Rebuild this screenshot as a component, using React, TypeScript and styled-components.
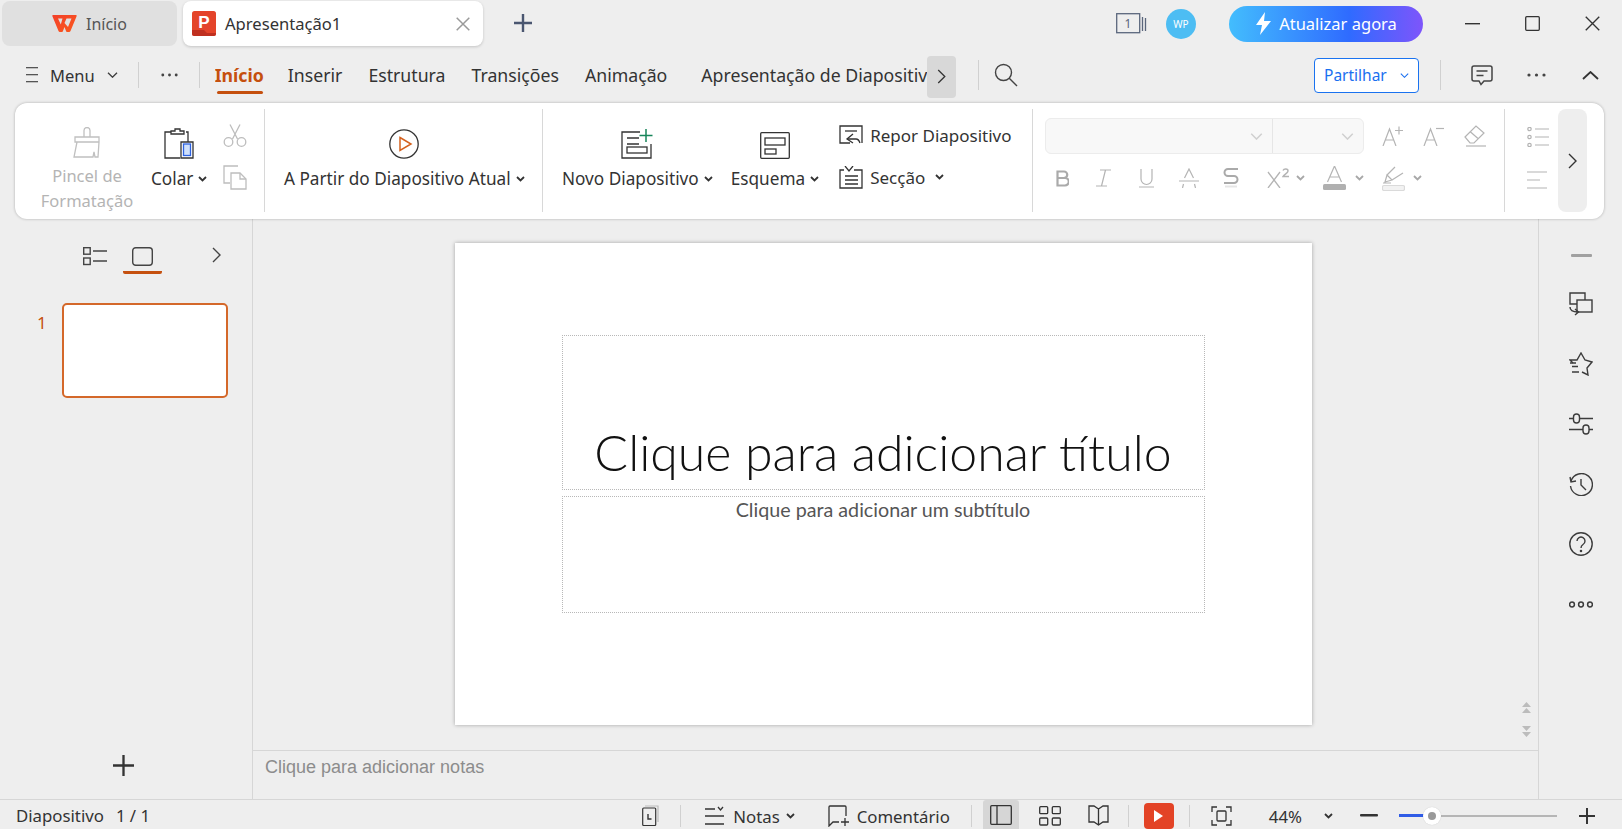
import React from 'react';
import styled, { createGlobalStyle } from 'styled-components';

const GlobalStyle = createGlobalStyle`
  html, body { margin: 0; padding: 0; height: 100%; overflow: hidden; background: #eeeeee; }
  body { font-family: "Noto Sans", "Liberation Sans", sans-serif; color: #333; }
  #root { height: 100%; }
  svg { display: block; flex: none; }
`;

const ACCENT = '#c5500f';
const INK = '#3c3c3c';
const MUTED = '#b4b4b4';

const Page = styled.div`
  width: 1622px;
  height: 829px;
  display: flex;
  flex-direction: column;
  background: #eeeeee;
  overflow: hidden;
`;

/* ---------- title bar ---------- */
const TitleBar = styled.div`
  height: 50px;
  display: flex;
  align-items: flex-start;
  padding: 1px 0 0 2px;
  box-sizing: border-box;
  flex: none;
`;

const Tab = styled.div<{ $active?: boolean }>`
  height: 45px;
  width: ${p => (p.$active ? 300 : 175)}px;
  margin-right: ${p => (p.$active ? 0 : 6)}px;
  box-sizing: border-box;
  display: flex;
  align-items: center;
  border-radius: 8px;
  background: ${p => (p.$active ? '#fff' : '#e0e0e0')};
  box-shadow: ${p => (p.$active ? '0 1px 3px rgba(0,0,0,.18)' : 'none')};
  padding-left: ${p => (p.$active ? 9 : 50)}px;
  font-size: ${p => (p.$active ? 16.6 : 16)}px;
  color: ${p => (p.$active ? '#333' : '#555')};
`;

const TabLabel = styled.span<{ $wide?: boolean }>`
  margin-left: 9px;
  flex: ${p => (p.$wide ? 1 : 'none')};
`;

const TabClose = styled.span`
  margin-right: 13px;
`;

const NewTab = styled.span`
  margin: 13px 0 0 31px;
`;

const TitleRight = styled.div`
  margin-left: auto;
  display: flex;
  align-items: center;
  height: 45px;
`;

const Avatar = styled.div`
  width: 30px;
  height: 30px;
  border-radius: 50%;
  margin: 0 33px 0 19px;
  background: #4dbdf3;
  color: #fff;
  font-size: 10px;
  display: flex;
  align-items: center;
  justify-content: center;
`;

const UpgradeButton = styled.div`
  width: 194px;
  height: 36px;
  border-radius: 18px;
  display: flex;
  align-items: center;
  justify-content: center;
  gap: 7px;
  color: #fff;
  font-size: 16.5px;
  background: linear-gradient(90deg, #43bdfd 0%, #2f6bff 62%, #7e55fb 100%);
`;

const WindowControls = styled.div`
  display: flex;
  align-items: center;
  gap: 45px;
  margin: 0 22px 0 42px;
`;

/* ---------- menu bar ---------- */
const MenuBar = styled.div`
  height: 50px;
  display: flex;
  align-items: center;
  flex: none;
  padding-left: 26px;
  position: relative;
`;

const MenuLabel = styled.span`
  font-size: 16.5px;
  margin: 0 12px 0 12px;
  color: #333;
`;

const VLine = styled.span<{ $h: number; $ml?: number; $mr?: number }>`
  width: 1px;
  height: ${p => p.$h}px;
  background: #d0d0d0;
  flex: none;
  margin-left: ${p => p.$ml ?? 0}px;
  margin-right: ${p => p.$mr ?? 0}px;
`;

const Dots = styled.span<{ $ml: number; $mr: number }>`
  margin: 0 ${p => p.$mr}px 0 ${p => p.$ml}px;
`;

const RibbonTabs = styled.div`
  width: 712px;
  margin-left: 15px;
  display: flex;
  gap: 26px;
  overflow: hidden;
  white-space: nowrap;
  height: 50px;
  align-items: center;
`;

const RibbonTab = styled.span<{ $active?: boolean }>`
  position: relative;
  font-size: 17.7px;
  font-weight: ${p => (p.$active ? 700 : 400)};
  color: ${p => (p.$active ? ACCENT : '#333')};
  line-height: 50px;
  flex: none;
  &:first-child {
    margin-right: -2px;
  }
  &:last-child {
    margin-left: 8px;
  }
  &::after {
    content: '';
    display: ${p => (p.$active ? 'block' : 'none')};
    position: absolute;
    left: 2px;
    right: 1px;
    bottom: 6px;
    height: 3px;
    border-radius: 2px;
    background: ${ACCENT};
  }
`;

const TabScroll = styled.div`
  width: 29px;
  height: 42px;
  margin-top: 3px;
  border-radius: 4px;
  background: #d8d8d8;
  display: flex;
  align-items: center;
  justify-content: center;
  flex: none;
`;

const MenuRight = styled.div`
  margin-left: auto;
  display: flex;
  align-items: center;
  margin-right: 23px;
`;

const ShareButton = styled.div`
  width: 105px;
  height: 35px;
  box-sizing: border-box;
  border: 1px solid #1a73f0;
  border-radius: 4px;
  background: #fff;
  color: #1a6ff0;
  font-size: 15.5px;
  display: flex;
  align-items: center;
  padding-left: 9px;
  gap: 13px;
  margin-right: 21px;
`;

/* ---------- ribbon ---------- */
const Ribbon = styled.div`
  height: 116px;
  margin: 3px 18px 0 15px;
  flex: none;
  box-sizing: border-box;
  background: #fff;
  border-radius: 12px;
  box-shadow: 0 0 3px rgba(0, 0, 0, 0.28);
  display: flex;
  position: relative;
  z-index: 2;
  padding: 6px 17px 7px 0;
`;

const Group = styled.div<{ $w: number; $pl?: number; $end?: boolean }>`
  width: ${p => p.$w}px;
  flex: ${p => (p.$end ? 1 : 'none')};
  box-sizing: border-box;
  padding-left: ${p => p.$pl ?? 0}px;
  display: flex;
  border-right: ${p => (p.$end ? 'none' : '1px solid #d8d8d8')};
`;

const BigButton = styled.div<{ $w?: number; $ml?: number }>`
  width: ${p => (p.$w ? `${p.$w}px` : 'auto')};
  margin-left: ${p => p.$ml ?? 0}px;
  display: flex;
  flex-direction: column;
  align-items: center;
  padding-top: 18px;
`;

const BigIcon = styled.div`
  height: 32px;
  display: flex;
  align-items: flex-end;
  justify-content: center;
  margin-bottom: 7px;
`;

const BigLabel = styled.div<{ $muted?: boolean }>`
  font-size: 17.2px;
  line-height: 25px;
  white-space: nowrap;
  text-align: center;
  display: flex;
  align-items: center;
  flex-wrap: wrap;
  justify-content: center;
  color: ${p => (p.$muted ? MUTED : '#333')};
`;

const PaintLabel = styled(BigLabel)`
  display: block;
  margin-top: -2px;
  font-size: 16.5px;
`;

const CaretSpot = styled.span<{ $ml?: number }>`
  margin-left: ${p => p.$ml ?? 5}px;
`;

const SmallStack = styled.div<{ $w: number; $ml: number }>`
  width: ${p => p.$w}px;
  margin-left: ${p => p.$ml}px;
  padding-top: 13px;
  display: flex;
  flex-direction: column;
  gap: 16px;
`;

const SmallRow = styled.div`
  height: 26px;
  display: flex;
  align-items: center;
  font-size: 17px;
  white-space: nowrap;
  color: #333;
  gap: 7px;
`;

const FontBlock = styled.div`
  display: flex;
  flex-direction: column;
  padding-top: 9px;
  width: 100%;
`;

const FontRow = styled.div`
  display: flex;
  align-items: center;
`;

const Combo = styled.div`
  width: 319px;
  height: 36px;
  box-sizing: border-box;
  border: 1px solid #ececec;
  border-radius: 6px;
  background: #f8f8f8;
  display: flex;
  margin-right: 18px;
`;

const ComboCell = styled.div<{ $w: number; $split?: boolean }>`
  width: ${p => p.$w}px;
  box-sizing: border-box;
  display: flex;
  align-items: center;
  justify-content: flex-end;
  padding-right: 9px;
  border-right: ${p => (p.$split ? '1px solid #e6e6e6' : 'none')};
`;

const FormatRow = styled(FontRow)`
  margin-top: 10px;
  height: 28px;
  padding-left: 11px;
`;

const FormatSlot = styled.span<{ $ml: number }>`
  margin-left: ${p => p.$ml}px;
`;

const ListStack = styled.div`
  display: flex;
  flex-direction: column;
  padding: 18px 0 0 22px;
  gap: 24px;
`;

const RibbonScroll = styled.div`
  width: 29px;
  flex: none;
  background: #eeeeee;
  border-radius: 8px;
  display: flex;
  align-items: center;
  justify-content: center;
`;

/* ---------- workspace ---------- */
const Workspace = styled.div`
  flex: 1;
  min-height: 0;
  display: flex;
`;

const SlidePane = styled.div`
  width: 253px;
  flex: none;
  box-sizing: border-box;
  border-right: 1px solid #d6d6d6;
  display: flex;
  flex-direction: column;
`;

const PaneTabs = styled.div`
  display: flex;
  height: 56px;
  padding: 28px 0 0 83px;
  box-sizing: border-box;
`;

const PaneTab = styled.div`
  width: 39px;
  height: 27px;
  margin-left: 16px;
  box-sizing: border-box;
  display: flex;
  justify-content: center;
  border-bottom: 3px solid ${ACCENT};
  border-radius: 0 0 2px 2px;
`;

const PaneChevron = styled.span`
  margin-left: 50px;
`;

const ThumbRow = styled.div`
  display: flex;
  margin-top: 28px;
  padding-left: 37px;
`;

const ThumbNumber = styled.span`
  width: 25px;
  padding-top: 8px;
  font-size: 17px;
  line-height: 24px;
  color: ${ACCENT};
`;

const Thumb = styled.div`
  width: 166px;
  height: 95px;
  box-sizing: border-box;
  border: 2px solid #d4682a;
  border-radius: 5px;
  background: #fff;
`;

const AddSlide = styled.div`
  margin-top: auto;
  padding: 0 0 23px 113px;
`;

const EditorColumn = styled.div`
  flex: 1;
  min-width: 0;
  display: flex;
  flex-direction: column;
`;

const Canvas = styled.div`
  flex: 1;
  min-height: 0;
  position: relative;
  display: flex;
  justify-content: center;
  padding: 24px 25px 0 0;
`;

const Slide = styled.div`
  width: 857px;
  height: 482px;
  box-sizing: border-box;
  background: #fff;
  box-shadow: 0 0 4px rgba(0, 0, 0, 0.32);
  padding: 92px 107px 0;
  display: flex;
  flex-direction: column;
  gap: 6px;
`;

const Placeholder = styled.div<{ $title?: boolean }>`
  height: ${p => (p.$title ? 155 : 117)}px;
  box-sizing: border-box;
  border: 1px dotted #b8b8b8;
  padding-bottom: ${p => (p.$title ? 5 : 0)}px;
  display: flex;
  justify-content: center;
  align-items: ${p => (p.$title ? 'flex-end' : 'flex-start')};
  font-family: Lato, "Noto Sans", sans-serif;
  font-weight: ${p => (p.$title ? 300 : 400)};
  font-size: ${p => (p.$title ? 50 : 19.7)}px;
  line-height: ${p => (p.$title ? 64 : 26)}px;
  color: ${p => (p.$title ? '#111' : '#555')};
  white-space: nowrap;
`;

const PageArrows = styled.div`
  position: absolute;
  right: 7px;
  bottom: 12px;
  display: flex;
  flex-direction: column;
  gap: 12px;
`;

const NotesBar = styled.div`
  height: 49px;
  flex: none;
  box-sizing: border-box;
  border-top: 1px solid #d6d6d6;
  padding: 4px 0 0 12px;
  font-family: "Liberation Sans", sans-serif;
  font-size: 18px;
  line-height: 24px;
  color: #8c8c8c;
`;

const RightRail = styled.div`
  width: 84px;
  flex: none;
  box-sizing: border-box;
  border-left: 1px solid #d6d6d6;
  display: flex;
  flex-direction: column;
  align-items: center;
  padding: 35px 0 0 1px;
`;

const RailRule = styled.div`
  width: 21px;
  height: 3px;
  border-radius: 1px;
  background: #a0a0a0;
  margin-bottom: 17px;
`;

const RailCell = styled.div`
  height: 60px;
  display: flex;
  align-items: center;
  justify-content: center;
`;

/* ---------- status bar ---------- */
const StatusBar = styled.div`
  height: 30px;
  flex: none;
  box-sizing: border-box;
  border-top: 1px solid #d6d6d6;
  display: flex;
  align-items: center;
  padding-left: 16px;
  font-size: 16.8px;
  color: #333;
`;

const StatusTools = styled.div`
  margin-left: auto;
  display: flex;
  align-items: center;
  height: 100%;
  box-sizing: border-box;
  padding: 2px 27px 0 0;
`;

const StatusLabel = styled.span<{ $ml: number; $mr?: number }>`
  margin-left: ${p => p.$ml}px;
  margin-right: ${p => p.$mr ?? 0}px;
  padding-top: 2px;
  white-space: nowrap;
`;

const StatusSlot = styled.span<{ $ml: number }>`
  margin-left: ${p => p.$ml}px;
`;

const ViewButton = styled.div`
  width: 36px;
  height: calc(100% + 2px);
  margin: -2px 0 0 11px;
  background: #d6d6d6;
  border-radius: 3px 3px 0 0;
  display: flex;
  align-items: center;
  justify-content: center;
`;

const PlayButton = styled.div`
  width: 30px;
  height: 26px;
  margin: 1px 0 0 15px;
  align-self: flex-start;
  background: #e34326;
  border-radius: 4px;
  display: flex;
  align-items: center;
  justify-content: center;
`;

const ZoomTrack = styled.div`
  width: 158px;
  height: 2px;
  margin-left: 21px;
  background: #b5b5b5;
  position: relative;
`;

const ZoomFill = styled.div`
  position: absolute;
  left: 0;
  top: -1px;
  height: 3px;
  background: #2f5ce6;
`;

const ZoomKnob = styled.div`
  position: absolute;
  top: -8px;
  width: 18px;
  height: 18px;
  box-sizing: border-box;
  border-radius: 50%;
  background: #fff;
  display: flex;
  align-items: center;
  justify-content: center;
  box-shadow: 0 0 1px rgba(0, 0, 0, 0.2);
  &::after {
    content: '';
    width: 8px;
    height: 8px;
    border-radius: 50%;
    background: #9a9a9a;
  }
`;

/* ---------- icons ---------- */
type SvgProps = { c?: string };

const Chevron = ({ c = INK, w = 11, h = 6 }: SvgProps & { w?: number; h?: number }) => (
  <svg width={w} height={h} viewBox="0 0 11 6" fill="none" stroke={c} strokeWidth="1.3">
    <path d="M1 .7l4.5 4.5L10 .7" />
  </svg>
);

const Caret = ({ c = '#333' }: SvgProps) => (
  <svg width="9" height="6" viewBox="0 0 9 6" fill="none" stroke={c} strokeWidth="1.8">
    <path d="M1 1l3.5 3.5L8 1" />
  </svg>
);

const RightChevron = ({ h = 16, c = '#333' }: SvgProps & { h?: number }) => (
  <svg width="9" height={h} viewBox="0 0 9 16" fill="none" stroke={c} strokeWidth="1.4">
    <path d="M1 1l7 7-7 7" />
  </svg>
);

const ThreeDots = ({ c = '#444', w = 19 }: SvgProps & { w?: number }) => (
  <svg width={w} height="4" viewBox="0 0 19 4" fill={c}>
    <circle cx="2" cy="2" r="1.6" />
    <circle cx="9.5" cy="2" r="1.6" />
    <circle cx="17" cy="2" r="1.6" />
  </svg>
);

const WpsLogo = () => (
  <svg width="25" height="17" viewBox="0 0 25 17">
    <defs>
      <linearGradient id="wpsRed" x1="0" y1="0" x2="1" y2="1">
        <stop offset="0" stopColor="#f2402a" />
        <stop offset="1" stopColor="#fb5a1e" />
      </linearGradient>
    </defs>
    <path d="M1.5 0h22a1 1 0 0 1 1 1.4L18.500 16a1.500 1.500 0 0 1-1.400 1h-2a1 1 0 0 1-1-.7L12.500 12l-1.600 4.300a1 1 0 0 1-1 .7h-2a1.500 1.500 0 0 1-1.400-1L.5 1.400A1 1 0 0 1 1.500 0z" fill="url(#wpsRed)" />
    <path d="M6 3.500h4.500L8.800 9.500zM12.500 8L14.500 3.500h5L16 12z" fill="#e0e0e0" />
  </svg>
);

const PptIcon = () => (
  <svg width="24" height="25" viewBox="0 0 24 25">
    <rect width="24" height="25" rx="2.5" fill="#e4442a" />
    <path d="M0 19h12l3 3h9v.5a2.5 2.5 0 0 1-2.500 2.500h-19A2.500 2.500 0 0 1 0 22.500z" fill="#bf3020" />
    <text x="12" y="16.500" textAnchor="middle" fontFamily="Liberation Sans" fontWeight="700" fontSize="17" fill="#fff">P</text>
  </svg>
);

const CloseX = ({ s = 14, c = '#9a9a9a', sw = 1.5 }: SvgProps & { s?: number; sw?: number }) => (
  <svg width={s} height={s} viewBox="0 0 14 14" fill="none" stroke={c} strokeWidth={sw}>
    <path d="M.7.7l12.6 12.6M13.3.7L.7 13.3" />
  </svg>
);

const PlusIcon = ({ s = 18, c = '#4a5670', sw = 2.4 }: SvgProps & { s?: number; sw?: number }) => (
  <svg width={s} height={s} viewBox="0 0 18 18" fill="none" stroke={c} strokeWidth={sw}>
    <path d="M9 0v18M0 9h18" />
  </svg>
);

const SheetCount = () => (
  <svg width="31" height="21" viewBox="0 0 31 21" fill="none" stroke="#5a667c" strokeWidth="1.3">
    <rect x=".7" y=".7" width="23" height="19" />
    <path d="M26.500 4v14M29.500 5v13" />
    <text x="12" y="15" textAnchor="middle" fontFamily="Noto Sans" fontSize="12" fill="#5a667c" stroke="none">1</text>
  </svg>
);

const Bolt = () => (
  <svg width="17" height="23" viewBox="0 0 17 23" fill="#fff">
    <path d="M10 0L1 13h6l-2 10 11-14H9z" />
  </svg>
);

const MinimizeIcon = () => (
  <svg width="15" height="2" viewBox="0 0 15 2" fill="#333"><rect width="15" height="1.4" /></svg>
);

const MaximizeIcon = () => (
  <svg width="15" height="15" viewBox="0 0 15 15" fill="none" stroke="#333" strokeWidth="1.3">
    <rect x=".7" y=".7" width="13.6" height="13.6" rx="1" />
  </svg>
);

const MenuIcon = () => (
  <svg width="12" height="20" viewBox="0 0 12 20" fill="#555">
    <rect y="2" width="12" height="1.3" /><rect y="9" width="12" height="1.3" /><rect y="16" width="12" height="1.3" />
  </svg>
);

const SearchIcon = () => (
  <svg width="24" height="24" viewBox="0 0 24 24" fill="none" stroke="#444" strokeWidth="1.4">
    <circle cx="9.5" cy="9.5" r="8" /><path d="M15 15l8 8" />
  </svg>
);

const CommentIcon = () => (
  <svg width="22" height="21" viewBox="0 0 22 21" fill="none" stroke="#444" strokeWidth="1.5">
    <path d="M3 1h16a2 2 0 0 1 2 2v11a2 2 0 0 1-2 2h-6l-3 3.500L8 16H3a2 2 0 0 1-2-2V3a2 2 0 0 1 2-2z" />
    <path d="M5.500 6h11M5.500 10.500h7" />
  </svg>
);

const PaintBrush = () => (
  <svg width="28" height="31" viewBox="0 0 28 31" fill="none" stroke="#c0c0c0" strokeWidth="1.3">
    <path d="M11 10V3.500a3 3 0 0 1 6 0V10" />
    <path d="M2 10h24v5H2zM4 15L1 30h19l1-5 1 5h3l1-15" />
  </svg>
);

const PasteIcon = () => (
  <svg width="30" height="31" viewBox="0 0 30 31" fill="none" stroke="#333" strokeWidth="1.3">
    <path d="M7 4H1v26h15M22 4h2v10" />
    <path d="M7 6V3h4V1h5v2h4v3z" />
    <path d="M17 14h12v16H17z" fill="#fff" />
    <rect x="19.500" y="16" width="7" height="11.500" stroke="#2d62e0" fill="#cfe0fb" />
  </svg>
);

const ScissorsIcon = () => (
  <svg width="24" height="23" viewBox="0 0 24 23" fill="none" stroke="#bdbdbd" strokeWidth="1.3">
    <path d="M7 .5L14.500 15M17 .5L9.500 15" />
    <circle cx="5.500" cy="18" r="4.300" /><circle cx="18.500" cy="18" r="4.300" />
  </svg>
);

const CopyIcon = () => (
  <svg width="24" height="25" viewBox="0 0 24 25" fill="none" stroke="#bdbdbd" strokeWidth="1.3">
    <path d="M15 1H1v17h6" />
    <path d="M8 8h9l6 6v10H8z" /><path d="M17 8v6h6" />
  </svg>
);

const PlayCircle = () => (
  <svg width="30" height="30" viewBox="0 0 30 30" fill="none">
    <circle cx="15" cy="15" r="14.200" stroke="#333" strokeWidth="1.3" />
    <path d="M11 8.500L22 15l-11 6.500z" stroke="#d4611e" strokeWidth="1.5" />
  </svg>
);

const NewSlideIcon = () => (
  <svg width="32" height="30" viewBox="0 0 32 30" fill="none" stroke="#333" strokeWidth="1.3">
    <path d="M19 3H1v26h29V15" />
    <path d="M6 9h12M6 15h12" /><rect x="6" y="18" width="20" height="6" />
    <path d="M25 0v13M18.500 6.500h13" stroke="#17855a" strokeWidth="1.5" />
  </svg>
);

const LayoutIcon = () => (
  <svg width="30" height="27" viewBox="0 0 30 27" fill="none" stroke="#333" strokeWidth="1.3">
    <rect x=".7" y=".7" width="28.600" height="25.600" rx="1" />
    <rect x="5" y="6" width="20" height="7" /><rect x="5" y="17" width="11" height="5" />
  </svg>
);

const ResetIcon = () => (
  <svg width="24" height="21" viewBox="0 0 24 21" fill="none" stroke="#333" strokeWidth="1.3">
    <path d="M11 18H1V1h22v17" />
    <path d="M6 6h12" />
    <path d="M14 9l-6 5 6 4" /><path d="M8 14h9c2 0 3 1 4 4" />
  </svg>
);

const SectionIcon = () => (
  <svg width="24" height="23" viewBox="0 0 24 23" fill="none" stroke="#333" strokeWidth="1.3">
    <path d="M5 4H1v18h22V4H15" />
    <path d="M6 0l4 5 4-5" />
    <path d="M6 10h13M6 14h13M6 18h13" />
  </svg>
);

const FontGrow = ({ minus }: { minus?: boolean }) => (
  <svg width="22" height="20" viewBox="0 0 22 20" fill="none" stroke={MUTED} strokeWidth="1.2">
    <path d="M1 20L7.500 3 14 20M3.500 14h8" />
    {minus ? <path d="M13 2.500h8" /> : <path d="M17 .5v8M13 4.500h8" />}
  </svg>
);

const EraserIcon = () => (
  <svg width="24" height="22" viewBox="0 0 24 22" fill="none" stroke={MUTED} strokeWidth="1.2">
    <path d="M2 12L13 1l8 7-10 10H7z" /><path d="M7 6.500l8 7" /><path d="M3 21h20" />
  </svg>
);

const BoldGlyph = () => (
  <svg width="13" height="17" viewBox="0 0 13 17" fill="none" stroke="#aaaaaa" strokeWidth="2.2">
    <path d="M1.500 8V1.500H8a3.200 3.200 0 0 1 0 6.500H1.500v7.500H9a3.700 3.700 0 0 0 0-7.500" />
  </svg>
);

const ItalicGlyph = () => (
  <svg width="17" height="18" viewBox="0 0 17 18" fill="none" stroke={MUTED} strokeWidth="1.2">
    <path d="M5 1h11M1 17h11M10.500 1L6.500 17" />
  </svg>
);

const UnderlineGlyph = () => (
  <svg width="15" height="19" viewBox="0 0 15 19" fill="none" stroke={MUTED} strokeWidth="1.2">
    <path d="M2 0v10a5.500 5.500 0 0 0 11 0V0M0 18h15" />
  </svg>
);

const StrikeGlyph = () => (
  <svg width="20" height="20" viewBox="0 0 20 20" fill="none" stroke={MUTED} strokeWidth="1.2">
    <path d="M5.500 10L10 1l4.500 9M0 13h20M4.500 16l-1 4M15.500 16l1 4" />
  </svg>
);

const ShadowGlyph = () => (
  <svg width="16" height="20" viewBox="0 0 16 20" fill="none" stroke="#aaaaaa" strokeWidth="2">
    <path d="M15 1H5a3.500 3.500 0 0 0 0 7h6a3.500 3.500 0 0 1 0 7H1" />
    <path d="M2 18.500h12" stroke="#e6e6e6" />
  </svg>
);

const SuperGlyph = () => (
  <svg width="23" height="20" viewBox="0 0 23 20" fill="none" stroke={MUTED} strokeWidth="1.3">
    <path d="M1 4l12 16M13 4L1 20" />
    <path d="M16 2.500c1-2 5-2 5 .5 0 2-4 3.500-5 5.500h6" strokeWidth="1.5" />
  </svg>
);

const FontColorGlyph = () => (
  <svg width="23" height="24" viewBox="0 0 23 24" fill="none">
    <path d="M4.500 16L11.500 0l7 16M7 11h9" stroke={MUTED} strokeWidth="1.2" />
    <rect y="18" width="23" height="6" rx="1.500" fill="#b0b0b0" />
  </svg>
);

const HighlightGlyph = () => (
  <svg width="23" height="25" viewBox="0 0 23 25" fill="none" stroke={MUTED} strokeWidth="1.2">
    <path d="M3 16l2-7 5 5zM5 9l8-8M10 14l11-7M1 17h8" />
    <rect x=".5" y="19.500" width="22" height="5" rx="1.500" stroke="#dadada" fill="#f2f2f2" />
  </svg>
);

const BulletList = () => (
  <svg width="22" height="20" viewBox="0 0 22 20" fill="none" stroke={MUTED} strokeWidth="1.2">
    <circle cx="2.500" cy="2" r="1.700" /><circle cx="2.500" cy="10" r="1.700" /><circle cx="2.500" cy="18" r="1.700" />
    <path d="M8 2h14M8 10h14M8 18h14" />
  </svg>
);

const AlignLines = () => (
  <svg width="20" height="18" viewBox="0 0 20 18" fill="none" stroke={MUTED} strokeWidth="1.2">
    <path d="M0 1h20M0 9h13M0 17h20" />
  </svg>
);

const OutlineIcon = () => (
  <svg width="24" height="19" viewBox="0 0 24 19" fill="none" stroke="#444" strokeWidth="1.4">
    <rect x=".7" y=".7" width="6.500" height="6.500" /><rect x=".7" y="11" width="6.500" height="6.500" />
    <path d="M10 4h14M10 14h14" />
  </svg>
);

const SlideTabIcon = () => (
  <svg width="21" height="19" viewBox="0 0 21 19" fill="none" stroke="#444" strokeWidth="1.4">
    <rect x=".7" y=".7" width="19.600" height="17.600" rx="3" />
  </svg>
);

const RailSwitch = () => (
  <svg width="24" height="24" viewBox="0 0 24 24" fill="none" stroke="#3c3c3c" strokeWidth="1.4">
    <path d="M8 12H1V1h15v7" /><rect x="8" y="8" width="15" height="12" />
    <path d="M1 15c0 4 3 5 8 5M6 17l3.500 3L6 23" />
  </svg>
);

const RailStar = () => (
  <svg width="24" height="24" viewBox="0 0 24 24" fill="none" stroke="#3c3c3c" strokeWidth="1.4">
    <path d="M4 11L1 8h7l4-7 4 7 7 2-5 6 1 7-6-3" />
    <path d="M1 11h6M3 14.500h6M3 20h7" />
  </svg>
);

const RailSliders = () => (
  <svg width="24" height="22" viewBox="0 0 24 22" fill="none" stroke="#3c3c3c" strokeWidth="1.4">
    <rect x="4.500" y="1" width="6" height="9" rx="3" /><path d="M0 5.500h4.500M10.500 5.500H24" />
    <rect x="14" y="12" width="6" height="9" rx="3" /><path d="M0 16.500h14M20 16.500h4" />
  </svg>
);

const RailHistory = () => (
  <svg width="24" height="23" viewBox="0 0 24 23" fill="none" stroke="#3c3c3c" strokeWidth="1.4">
    <path d="M2 8a11 11 0 1 1-.5 5" /><path d="M1 4l1 5 5-1" /><path d="M12 6v6l5 5" />
  </svg>
);

const RailHelp = () => (
  <svg width="24" height="24" viewBox="0 0 24 24" fill="none" stroke="#3c3c3c" strokeWidth="1.4">
    <circle cx="12" cy="12" r="11.200" /><path d="M8 9a4 4 0 1 1 6 3.500c-1.500 1-2 1.500-2 3.500" />
    <circle cx="12" cy="19" r=".6" fill="#3c3c3c" />
  </svg>
);

const RailMore = () => (
  <svg width="24" height="7" viewBox="0 0 24 7" fill="none" stroke="#3c3c3c" strokeWidth="1.5">
    <circle cx="3" cy="3.500" r="2.400" /><circle cx="12" cy="3.500" r="2.400" /><circle cx="21" cy="3.500" r="2.400" />
  </svg>
);

const PageArrowIcon = ({ down }: { down?: boolean }) => (
  <svg width="9" height="12" viewBox="0 0 9 12" fill="#bcbcbc">
    <path d={down ? 'M0 0h9L4.500 5zM0 6h9l-4.500 5z' : 'M4.500 0L9 5H0zM4.500 6L9 11H0z'} />
  </svg>
);

const RecentIcon = () => (
  <svg width="17" height="21" viewBox="0 0 17 21" fill="none" stroke="#333" strokeWidth="1.2">
    <rect x=".7" y="3" width="13" height="17.500" rx="1" />
    <path d="M3 1h13v16" stroke="#bbb" /><path d="M6 9v5h3.500" strokeWidth="1.4" />
  </svg>
);

const NotesIcon = () => (
  <svg width="19" height="20" viewBox="0 0 19 20" fill="none" stroke="#333" strokeWidth="1.3">
    <path d="M0 3h10M13 1l2.500 3L18 1M0 10h19M0 18h19" />
  </svg>
);

const CommentAddIcon = () => (
  <svg width="22" height="22" viewBox="0 0 22 22" fill="none" stroke="#333" strokeWidth="1.3">
    <path d="M11 17H5l-4 4V2a1 1 0 0 1 1-1h15a1 1 0 0 1 1 1v9" /><path d="M17 13v8M13 17h8" />
  </svg>
);

const NormalViewIcon = () => (
  <svg width="22" height="20" viewBox="0 0 22 20" fill="none" stroke="#333" strokeWidth="1.3">
    <rect x=".7" y=".7" width="20.600" height="18.600" rx="1" /><path d="M7 1v18" />
  </svg>
);

const GridViewIcon = () => (
  <svg width="22" height="20" viewBox="0 0 22 20" fill="none" stroke="#333" strokeWidth="1.3">
    <rect x=".7" y=".7" width="8" height="7" rx="1" /><rect x="13.300" y=".7" width="8" height="7" rx="1" />
    <rect x=".7" y="12" width="8" height="7" rx="1" /><rect x="13.300" y="12" width="8" height="7" rx="1" />
  </svg>
);

const BookIcon = () => (
  <svg width="21" height="21" viewBox="0 0 21 21" fill="none" stroke="#333" strokeWidth="1.3">
    <path d="M10.500 4L6 1H1v16h5l4.500 3 4.500-3h5V1h-5zM10.500 4v16" />
  </svg>
);

const PlayMark = () => (
  <svg width="9" height="12" viewBox="0 0 9 12" fill="#fff"><path d="M0 0l9 6-9 6z" /></svg>
);

const FitIcon = () => (
  <svg width="21" height="20" viewBox="0 0 21 20" fill="none" stroke="#333" strokeWidth="1.3">
    <path d="M1 6V1h5M15 1h5v5M20 14v5h-5M6 19H1v-5" /><rect x="6" y="5" width="9" height="10" rx="1" />
  </svg>
);

const MinusBar = () => (
  <svg width="18" height="3" viewBox="0 0 18 3" fill="#333"><rect width="18" height="2.600" rx="1" /></svg>
);

const railIcons = [RailSwitch, RailStar, RailSliders, RailHistory, RailHelp, RailMore];

const ribbonTabs = ['Início', 'Inserir', 'Estrutura', 'Transições', 'Animação', 'Apresentação de Diapositivos'];

const App: React.FC = () => (
  <Page>
    <GlobalStyle />
    <TitleBar>
      <Tab>
        <WpsLogo />
        <TabLabel>Início</TabLabel>
      </Tab>
      <Tab $active>
        <PptIcon />
        <TabLabel $wide>Apresentação1</TabLabel>
        <TabClose><CloseX /></TabClose>
      </Tab>
      <NewTab><PlusIcon /></NewTab>
      <TitleRight>
        <SheetCount />
        <Avatar>WP</Avatar>
        <UpgradeButton><Bolt />Atualizar agora</UpgradeButton>
        <WindowControls>
          <MinimizeIcon />
          <MaximizeIcon />
          <CloseX s={15} c="#333" sw={1.3} />
        </WindowControls>
      </TitleRight>
    </TitleBar>

    <MenuBar>
      <MenuIcon />
      <MenuLabel>Menu</MenuLabel>
      <Chevron />
      <VLine $h={26} $ml={20} />
      <Dots $ml={22} $mr={21}><ThreeDots w={17} /></Dots>
      <VLine $h={26} />
      <RibbonTabs>
        {ribbonTabs.map((t, i) => (
          <RibbonTab key={t} $active={i === 0}>{t}</RibbonTab>
        ))}
      </RibbonTabs>
      <TabScroll><RightChevron h={15} /></TabScroll>
      <VLine $h={30} $ml={22} $mr={15} />
      <SearchIcon />
      <MenuRight>
        <ShareButton>Partilhar<Chevron c="#1a6ff0" w={9} h={5} /></ShareButton>
        <VLine $h={30} $mr={30} />
        <CommentIcon />
        <Dots $ml={34} $mr={36}><ThreeDots /></Dots>
        <svg width="17" height="9" viewBox="0 0 17 9" fill="none" stroke="#333" strokeWidth="1.8"><path d="M1 8l7.500-7L16 8" /></svg>
      </MenuRight>
    </MenuBar>

    <Ribbon>
      <Group $w={250} $pl={26}>
        <BigButton $w={92}>
          <BigIcon><PaintBrush /></BigIcon>
          <PaintLabel $muted>Pincel de<br />Formatação</PaintLabel>
        </BigButton>
        <BigButton $ml={18}>
          <BigIcon><PasteIcon /></BigIcon>
          <BigLabel>Colar<CaretSpot><Caret /></CaretSpot></BigLabel>
        </BigButton>
        <SmallStack $w={24} $ml={16}>
          <SmallRow><ScissorsIcon /></SmallRow>
          <SmallRow><CopyIcon /></SmallRow>
        </SmallStack>
      </Group>
      <Group $w={278} $pl={19}>
        <BigButton>
          <BigIcon><PlayCircle /></BigIcon>
          <BigLabel>A Partir do Diapositivo Atual<CaretSpot><Caret /></CaretSpot></BigLabel>
        </BigButton>
      </Group>
      <Group $w={490} $pl={19}>
        <BigButton>
          <BigIcon><NewSlideIcon /></BigIcon>
          <BigLabel>Novo Diapositivo<CaretSpot><Caret /></CaretSpot></BigLabel>
        </BigButton>
        <BigButton $ml={18}>
          <BigIcon><LayoutIcon /></BigIcon>
          <BigLabel>Esquema<CaretSpot><Caret /></CaretSpot></BigLabel>
        </BigButton>
        <SmallStack $w={180} $ml={20}>
          <SmallRow><ResetIcon />Repor Diapositivo</SmallRow>
          <SmallRow><SectionIcon />Secção<CaretSpot $ml={3}><Caret /></CaretSpot></SmallRow>
        </SmallStack>
      </Group>
      <Group $w={472} $pl={12}>
        <FontBlock>
          <FontRow>
            <Combo>
              <ComboCell $w={227} $split><Chevron c="#d0d0d0" w={13} h={7} /></ComboCell>
              <ComboCell $w={90}><Chevron c="#d0d0d0" w={13} h={7} /></ComboCell>
            </Combo>
            <FontGrow />
            <FormatSlot $ml={19}><FontGrow minus /></FormatSlot>
            <FormatSlot $ml={18}><EraserIcon /></FormatSlot>
          </FontRow>
          <FormatRow>
            <BoldGlyph />
            <FormatSlot $ml={26}><ItalicGlyph /></FormatSlot>
            <FormatSlot $ml={27}><UnderlineGlyph /></FormatSlot>
            <FormatSlot $ml={25}><StrikeGlyph /></FormatSlot>
            <FormatSlot $ml={24}><ShadowGlyph /></FormatSlot>
            <FormatSlot $ml={28}><SuperGlyph /></FormatSlot>
            <FormatSlot $ml={6}><Caret c="#a8a8a8" /></FormatSlot>
            <FormatSlot $ml={18}><FontColorGlyph /></FormatSlot>
            <FormatSlot $ml={9}><Caret c="#a8a8a8" /></FormatSlot>
            <FormatSlot $ml={18}><HighlightGlyph /></FormatSlot>
            <FormatSlot $ml={8}><Caret c="#a8a8a8" /></FormatSlot>
          </FormatRow>
        </FontBlock>
      </Group>
      <Group $w={53} $end>
        <ListStack>
          <BulletList />
          <AlignLines />
        </ListStack>
      </Group>
      <RibbonScroll><RightChevron h={16} /></RibbonScroll>
    </Ribbon>

    <Workspace>
      <SlidePane>
        <PaneTabs>
          <OutlineIcon />
          <PaneTab><SlideTabIcon /></PaneTab>
          <PaneChevron><RightChevron h={16} c="#444" /></PaneChevron>
        </PaneTabs>
        <ThumbRow>
          <ThumbNumber>1</ThumbNumber>
          <Thumb />
        </ThumbRow>
        <AddSlide><PlusIcon s={21} c="#333" sw={2} /></AddSlide>
      </SlidePane>

      <EditorColumn>
        <Canvas>
          <Slide>
            <Placeholder $title>Clique para adicionar título</Placeholder>
            <Placeholder>Clique para adicionar um subtítulo</Placeholder>
          </Slide>
          <PageArrows>
            <PageArrowIcon />
            <PageArrowIcon down />
          </PageArrows>
        </Canvas>
        <NotesBar>Clique para adicionar notas</NotesBar>
      </EditorColumn>

      <RightRail>
        <RailRule />
        {railIcons.map((Icon, i) => (
          <RailCell key={i}><Icon /></RailCell>
        ))}
      </RightRail>
    </Workspace>

    <StatusBar>
      <StatusLabel $ml={0}>Diapositivo</StatusLabel>
      <StatusLabel $ml={12}>1 / 1</StatusLabel>
      <StatusTools>
        <RecentIcon />
        <VLine $h={22} $ml={21} $mr={24} />
        <NotesIcon />
        <StatusLabel $ml={9} $mr={6}>Notas</StatusLabel>
        <Caret />
        <StatusSlot $ml={33}><CommentAddIcon /></StatusSlot>
        <StatusLabel $ml={7}>Comentário</StatusLabel>
        <VLine $h={22} $ml={21} />
        <ViewButton><NormalViewIcon /></ViewButton>
        <StatusSlot $ml={20}><GridViewIcon /></StatusSlot>
        <StatusSlot $ml={27}><BookIcon /></StatusSlot>
        <VLine $h={22} $ml={19} />
        <PlayButton><PlayMark /></PlayButton>
        <VLine $h={22} $ml={15} />
        <StatusSlot $ml={21}><FitIcon /></StatusSlot>
        <StatusLabel $ml={37} $mr={22}>44%</StatusLabel>
        <Caret />
        <StatusSlot $ml={27}><MinusBar /></StatusSlot>
        <ZoomTrack>
          <ZoomFill style={{ width: 25 }} />
          <ZoomKnob style={{ left: 24 }} />
        </ZoomTrack>
        <StatusSlot $ml={22}><PlusIcon s={16} c="#333" sw={2.2} /></StatusSlot>
      </StatusTools>
    </StatusBar>
  </Page>
);

export default App;
